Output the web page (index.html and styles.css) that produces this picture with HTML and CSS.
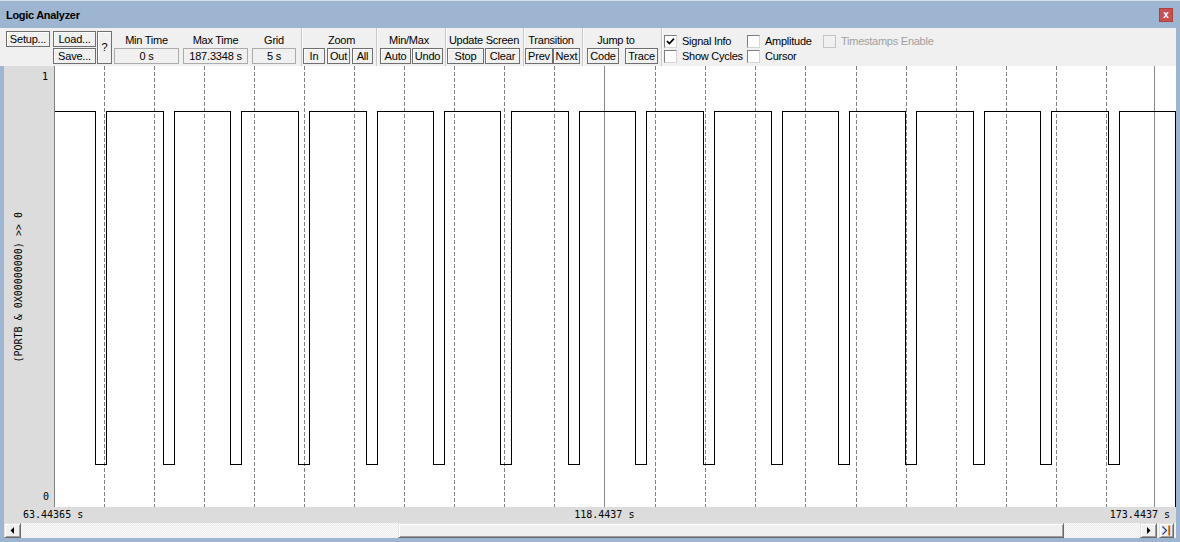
FILE: index.html
```html
<!DOCTYPE html>
<html>
<head>
<meta charset="utf-8">
<title>Logic Analyzer</title>
<link rel="stylesheet" href="styles.css">
</head>
<body>
<div class="titlebar">
  <span class="title">Logic Analyzer</span>
  <span class="close">x</span>
</div>
<div class="toolbar">
  <div class="filebtns">
    <div class="btn b-setup">Setup...</div>
    <div class="btn b-load">Load...</div>
    <div class="btn b-save">Save...</div>
    <div class="btn b-help">?</div>
  </div>
  <div class="field f-min"><div class="lbl">Min Time</div><div class="val">0 s</div></div>
  <div class="field f-max"><div class="lbl">Max Time</div><div class="val">187.3348 s</div></div>
  <div class="field f-grid"><div class="lbl">Grid</div><div class="val">5 s</div></div>
  <div class="sep"></div>
  <div class="grp g-zoom">
    <div class="lbl">Zoom</div>
    <div class="row"><div class="btn w-in">In</div><div class="btn w-out">Out</div><div class="btn w-all">All</div></div>
  </div>
  <div class="sep"></div>
  <div class="grp g-minmax">
    <div class="lbl">Min/Max</div>
    <div class="row"><div class="btn w-auto">Auto</div><div class="btn w-undo">Undo</div></div>
  </div>
  <div class="sep"></div>
  <div class="grp g-update">
    <div class="lbl">Update Screen</div>
    <div class="row"><div class="btn w-stop">Stop</div><div class="btn w-clear">Clear</div></div>
  </div>
  <div class="sep"></div>
  <div class="grp g-trans">
    <div class="lbl">Transition</div>
    <div class="row"><div class="btn w-prev">Prev</div><div class="btn w-next">Next</div></div>
  </div>
  <div class="sep"></div>
  <div class="grp g-jump">
    <div class="lbl">Jump to</div>
    <div class="row"><div class="btn w-code">Code</div><div class="btn w-trace">Trace</div></div>
  </div>
  <div class="sep"></div>
  <div class="checks">
    <div class="chk"><span class="box"><svg width="11" height="11" viewBox="0 0 11 11"><path d="M2 5.2 L4.4 7.6 L9 2.6" fill="none" stroke="#000" stroke-width="1.7"/></svg></span><span class="txt">Signal Info</span></div>
    <div class="chk"><span class="box"></span><span class="txt">Amplitude</span></div>
    <div class="chk disabled"><span class="box"></span><span class="txt">Timestamps Enable</span></div>
    <div class="chk"><span class="box"></span><span class="txt">Show Cycles</span></div>
    <div class="chk"><span class="box"></span><span class="txt">Cursor</span></div>
  </div>
</div>
<div class="main">
  <div class="yaxis">
    <div class="ytop">1</div>
    <div class="ymid"><span class="ylabel">(PORTB &amp; 0X00000000) &gt;&gt; 0</span></div>
    <div class="ybot">0</div>
  </div>
  <svg class="plot" width="1121" height="441" viewBox="0 0 1121 441" shape-rendering="crispEdges">
    <g stroke="#808080" stroke-width="1" stroke-dasharray="4 2">
      <line x1="49.5" y1="0" x2="49.5" y2="441"/>
      <line x1="99.5" y1="0" x2="99.5" y2="441"/>
      <line x1="149.5" y1="0" x2="149.5" y2="441"/>
      <line x1="199.5" y1="0" x2="199.5" y2="441"/>
      <line x1="249.5" y1="0" x2="249.5" y2="441"/>
      <line x1="299.5" y1="0" x2="299.5" y2="441"/>
      <line x1="349.5" y1="0" x2="349.5" y2="441"/>
      <line x1="399.5" y1="0" x2="399.5" y2="441"/>
      <line x1="449.5" y1="0" x2="449.5" y2="441"/>
      <line x1="499.5" y1="0" x2="499.5" y2="441"/>
      <line x1="600.5" y1="0" x2="600.5" y2="441"/>
      <line x1="650.5" y1="0" x2="650.5" y2="441"/>
      <line x1="700.5" y1="0" x2="700.5" y2="441"/>
      <line x1="750.5" y1="0" x2="750.5" y2="441"/>
      <line x1="801.5" y1="0" x2="801.5" y2="441"/>
      <line x1="851.5" y1="0" x2="851.5" y2="441"/>
      <line x1="901.5" y1="0" x2="901.5" y2="441"/>
      <line x1="951.5" y1="0" x2="951.5" y2="441"/>
      <line x1="1001.5" y1="0" x2="1001.5" y2="441"/>
      <line x1="1051.5" y1="0" x2="1051.5" y2="441"/>
    </g>
    <g stroke="#8a8a8a" stroke-width="1">
      <line x1="549.5" y1="0" x2="549.5" y2="441"/>
      <line x1="1099.5" y1="0" x2="1099.5" y2="441"/>
    </g>
    <path fill="none" stroke="#000" stroke-width="1" d="M0 45.5 H40.5 V398.5 H51.5 V45.5 H108.5 V398.5 H119.5 V45.5 H175.5 V398.5 H186.5 V45.5 H243.5 V398.5 H254.5 V45.5 H311.5 V398.5 H322.5 V45.5 H378.5 V398.5 H389.5 V45.5 H445.5 V398.5 H456.5 V45.5 H513.5 V398.5 H524.5 V45.5 H580.5 V398.5 H591.5 V45.5 H648.5 V398.5 H659.5 V45.5 H716.5 V398.5 H727.5 V45.5 H783.5 V398.5 H794.5 V45.5 H850.5 V398.5 H861.5 V45.5 H918.5 V398.5 H929.5 V45.5 H985.5 V398.5 H996.5 V45.5 H1053.5 V398.5 H1064.5 V45.5 H1120.5 V441"/>
  </svg>
</div>
<div class="timebar">
  <span class="t t-left">63.44365 s</span>
  <span class="t t-mid">118.4437 s</span>
  <span class="t t-right">173.4437 s</span>
</div>
<div class="scrollbar">
  <div class="sb-btn"><svg width="15" height="13" viewBox="0 0 15 13"><polygon points="9,3 9,10 5.5,6.5" fill="#000"/></svg></div>
  <div class="track t1"></div>
  <div class="thumb"></div>
  <div class="track t2"></div>
  <div class="sb-btn"><svg width="15" height="13" viewBox="0 0 15 13"><polygon points="6,3 6,10 9.5,6.5" fill="#000"/></svg></div>
  <div class="track gap"></div>
  <div class="sb-end"><svg width="13" height="13" viewBox="0 0 13 13"><polyline points="2.5,2.5 6.5,6.5 2.5,10.5" fill="none" stroke="#1f3f96" stroke-width="1.2"/><rect x="8" y="1.5" width="1.2" height="10" fill="#e88a1a"/><rect x="9.2" y="1.5" width="1" height="10" fill="#2f5fc4"/></svg></div>
  <div class="tail"></div>
</div>
</body>
</html>
```

FILE: styles.css
```css
* { box-sizing: border-box; }
html, body { margin: 0; padding: 0; }
body {
  width: 1180px;
  height: 542px;
  overflow: hidden;
  background: #9db5d1;
  font-family: "Liberation Sans", Arial, sans-serif;
  font-size: 11px;
  color: #000;
}

/* title bar */
.titlebar {
  height: 28px;
  display: flex;
  align-items: flex-start;
  padding: 0 7px 0 6px;
  border-top: 1px solid #d4e0ec;
}
.title {
  margin-top: 7px;
  font-weight: bold;
  font-size: 11px;
  line-height: 14px;
  letter-spacing: -0.3px;
}
.close {
  margin-left: auto;
  margin-top: 7px;
  width: 14px;
  height: 14px;
  background: #c75050;
  border: 1px solid #b04040;
  color: #fff;
  font-weight: bold;
  font-size: 10px;
  line-height: 11px;
  text-align: center;
}

/* toolbar */
.toolbar {
  width: 1176px;
  height: 38px;
  background: #f0f0f0;
  display: flex;
  align-items: flex-start;
}
.btn {
  height: 16px;
  border: 1px solid #6f6f6f;
  box-shadow: inset 1px 1px 0 #fff;
  background: #f0f0f0;
  text-align: center;
  line-height: 14px;
  white-space: nowrap;
  letter-spacing: -0.2px;
}
.filebtns {
  display: grid;
  grid-template-columns: 44px 3px 43px 1px 15px;
  grid-template-rows: 16px 16px;
  row-gap: 1px;
  margin: 3px 0 0 6px;
}
.b-setup { grid-column: 1; grid-row: 1; }
.b-load { grid-column: 3; grid-row: 1; }
.b-save { grid-column: 3; grid-row: 2; }
.b-help { grid-column: 5; grid-row: 1 / span 2; height: 33px; line-height: 30px; }

.field {
  display: flex;
  flex-direction: column;
  align-items: center;
  padding-top: 4px;
}
.lbl {
  height: 16px;
  line-height: 16px;
  white-space: nowrap;
  letter-spacing: -0.25px;
  text-align: center;
}
.val {
  width: 100%;
  height: 16px;
  border: 1px solid #acacac;
  background: #f0f0f0;
  text-align: center;
  line-height: 14px;
  letter-spacing: -0.2px;
}
.f-min { width: 65px; margin-left: 2px; }
.f-max { width: 65px; margin-left: 4px; }
.f-grid { width: 44px; margin-left: 4px; margin-right: 5px; }

.sep {
  width: 2px;
  height: 38px;
  border-left: 1px solid #c8c8c8;
  border-right: 1px solid #fbfbfb;
}
.grp {
  display: flex;
  flex-direction: column;
  padding-top: 4px;
}
.row { display: flex; }
.g-zoom { width: 73px; }
.g-zoom .lbl { padding-left: 4px; }
.g-zoom .row { gap: 2px; }
.g-minmax { width: 67px; }
.g-minmax .lbl { padding-right: 5px; }
.g-minmax .row { gap: 1px; padding-left: 2px; }
.g-update { width: 76px; }
.g-update .lbl { padding-right: 2px; }
.g-update .row { gap: 1px; }
.g-trans { width: 57px; }
.g-trans .lbl { padding-right: 5px; }
.g-jump { width: 77px; }
.g-jump .lbl { padding-right: 13px; }
.g-jump .row { gap: 6px; padding-left: 3px; }

.w-in { width: 22px; }
.w-out { width: 23px; }
.w-all { width: 21px; }
.w-auto { width: 31px; }
.w-undo { width: 31px; }
.w-stop { width: 37px; }
.w-clear { width: 35px; }
.w-prev { width: 28px; }
.w-next { width: 27px; }
.w-code { width: 32px; }
.w-trace { width: 33px; }

.checks {
  display: grid;
  grid-template-columns: 83px 76px auto;
  grid-template-rows: 13px 13px;
  row-gap: 2px;
  margin: 7px 0 0 1px;
}
.chk {
  display: flex;
  align-items: center;
  white-space: nowrap;
}
.box {
  width: 13px;
  height: 13px;
  border: 1px solid;
  border-color: #7e7e7e #d6d6d6 #d6d6d6 #7e7e7e;
  background: #fff;
  display: flex;
}
.txt {
  margin-left: 5px;
  line-height: 13px;
  letter-spacing: -0.25px;
}
.chk.disabled .box { border-color: #c4c4c4; background: #f0f0f0; }
.chk.disabled .txt { color: #a0a0a0; }

/* plot area */
.main {
  margin: 0 4px;
  height: 441px;
  display: flex;
}
.yaxis {
  width: 51px;
  background: #dcdcdc;
  border-right: 1px solid #808080;
  display: flex;
  flex-direction: column;
  font-family: "DejaVu Sans Mono", "Liberation Mono", monospace;
  font-size: 10px;
  line-height: 12px;
}
.ytop { text-align: right; padding: 5px 6px 0 0; height: 17px; }
.ybot { text-align: right; padding: 0 5px 4px 0; height: 16px; }
.ymid {
  flex: 1;
  display: flex;
  align-items: center;
}
.ylabel {
  margin-left: 9px;
  writing-mode: vertical-rl;
  transform: rotate(180deg);
  white-space: nowrap;
}
.plot {
  display: block;
  background: #fff;
}

/* time bar */
.timebar {
  margin: 0 4px;
  height: 16px;
  background: #dcdcdc;
  display: flex;
  align-items: center;
  font-family: "DejaVu Sans Mono", "Liberation Mono", monospace;
  font-size: 10px;
  line-height: 12px;
  white-space: pre;
}
.t-left { margin-left: 19px; }
.t-mid { margin-left: 491px; }
.t-right { margin-left: auto; margin-right: 6px; }

/* scrollbar */
.scrollbar {
  margin: 0 4px;
  height: 15px;
  display: flex;
}
.track {
  height: 15px;
  background: repeating-conic-gradient(#ebebeb 0 25%, #fbfbfb 0 50%) 0 0 / 2px 2px;
}
.t1 { width: 377px; }
.t2 { flex: 1; }
.gap { width: 2px; }
.thumb, .sb-btn, .sb-end {
  height: 15px;
  background: #f0f0f0;
  border-style: solid;
  border-width: 1px;
  border-color: #e3e3e3 #696969 #696969 #e3e3e3;
  box-shadow: inset 1px 1px 0 #fff, inset -1px -1px 0 #a0a0a0;
}
.thumb { width: 666px; }
.sb-btn { width: 17px; display: flex; align-items: center; justify-content: center; }
.sb-btn svg, .sb-end svg { display: block; }
.sb-end { width: 15px; display: flex; align-items: center; justify-content: center; }
.tail { width: 2px; background: #f0f0f0; }
```
